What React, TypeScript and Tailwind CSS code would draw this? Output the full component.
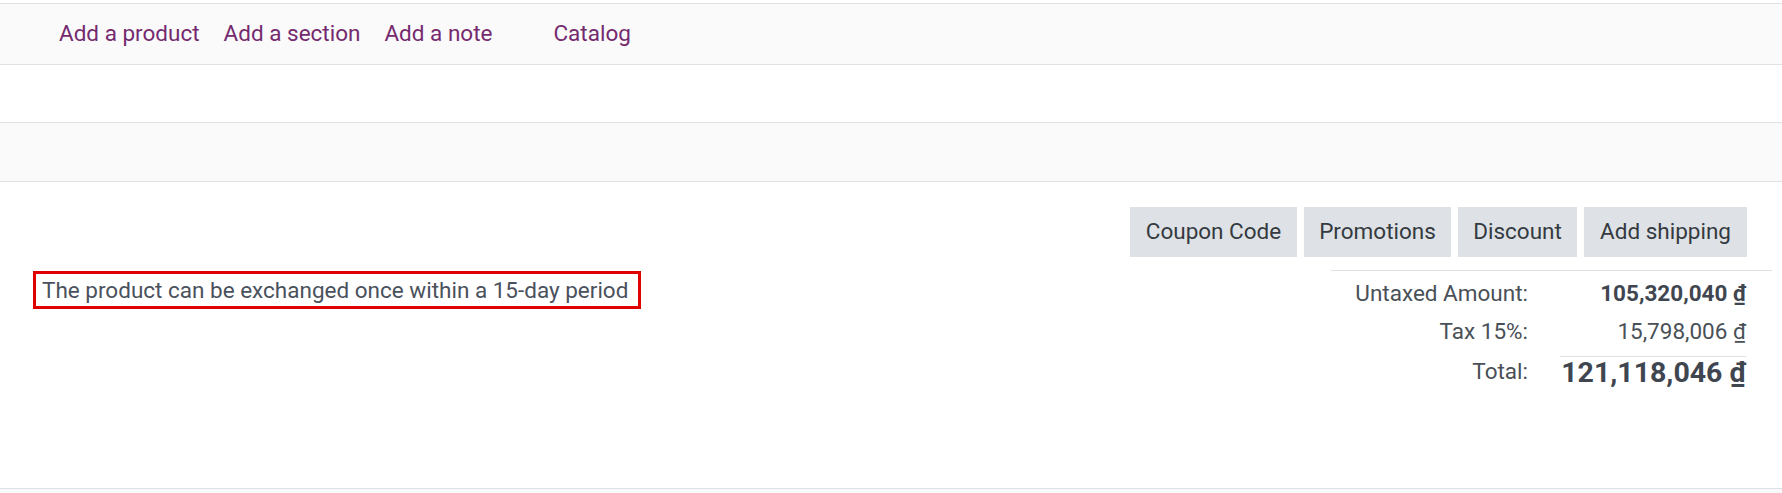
const navLinks = ["Add a product", "Add a section", "Add a note"];
const actions = [
  { label: "Coupon Code", w: "w-[167px]" },
  { label: "Promotions", w: "w-[147px]" },
  { label: "Discount", w: "w-[119px]" },
  { label: "Add shipping", w: "w-[163px]" },
];

export default function App() {
  return (
    <div className="w-[1782px] h-[493px] overflow-hidden bg-white font-['Roboto',sans-serif] text-[#495057]">
      <div className="h-[3px]" />
      {/* add line row */}
      <div className="h-[62px] border-y border-[#e2e2e2] bg-[#fafafa] flex items-center pl-[59px] text-[22.5px] text-[#752a6f]">
        <div className="flex gap-[24px]">
          {navLinks.map((l) => (
            <a key={l} className="cursor-pointer">{l}</a>
          ))}
        </div>
        <a className="ml-[61px] cursor-pointer">Catalog</a>
      </div>
      <div className="h-[57px]" />
      <div className="h-[60px] border-y border-[#e2e2e2] bg-[#fafafa]" />

      {/* footer: notes + totals */}
      <div className="h-[307px] border-b border-[#dee2e6] pt-[25px]">
        <div className="flex justify-end gap-[7px] pr-[35px]">
          {actions.map((a) => (
            <button key={a.label} className={`${a.w} h-[50px] bg-[#dee2e6] text-[22.5px] text-[#343a40]`}>
              {a.label}
            </button>
          ))}
        </div>
        <div className="flex items-start justify-between mt-[13px]">
          <div className="ml-[33px] mt-[1px] border-[3px] border-[#e00000] pl-[6px] pr-[10px] h-[38px] leading-[32px] text-[22.5px] text-[#4a515c]">
            The product can be exchanged once within a 15-day period
          </div>
          <div className="w-[441px] mr-[10px] border-t border-[#dee2e6] pt-[3px] text-[22.5px]">
            <div className="grid grid-cols-[197px_1fr] items-center">
              <div className="h-[38px] leading-[38px] text-right">Untaxed Amount:</div>
              <div className="h-[38px] leading-[38px] text-right pr-[26px] font-bold text-[#3f4650]">105,320,040 ₫</div>
              <div className="h-[38px] leading-[38px] text-right">Tax 15%:</div>
              <div className="h-[38px] leading-[38px] text-right pr-[26px]">15,798,006 ₫</div>
            </div>
            <div className="grid grid-cols-[197px_1fr] items-center mt-[5px]">
              <div className="text-right">Total:</div>
              <div className="flex justify-end pr-[26px]">
                <div className="w-[186px] border-t border-[#dee2e6] text-right whitespace-nowrap text-[28.5px] leading-[31px] font-bold text-[#3f4650]">
                  121,118,046 ₫
                </div>
              </div>
            </div>
          </div>
        </div>
      </div>
      <div className="h-[5px] bg-[#f8f9fa]" />
    </div>
  );
}
